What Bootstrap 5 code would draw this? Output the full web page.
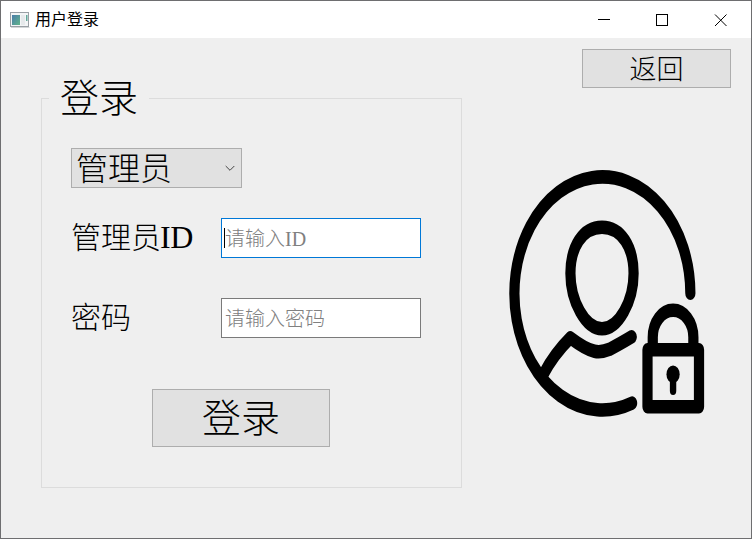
<!DOCTYPE html>
<html lang="zh-CN">
<head>
<meta charset="utf-8">
<title>用户登录</title>
<link href="https://cdn.jsdelivr.net/npm/bootstrap@5.3.0/dist/css/bootstrap.min.css" rel="stylesheet">
<style>
body{margin:0;overflow:hidden;color:#000;font-family:"Noto Sans CJK SC",sans-serif;font-weight:300}
.window{width:752px;height:539px;border:1px solid #6e6e70;background:#efefef}
.titlebar{height:37px;background:#fff;font-size:16px;font-weight:400;line-height:34px;padding-left:9px}
.titlebar .caption{margin-left:5px;padding-bottom:3px}
.winbtns{margin-right:1px}
.winbtn{width:58px;height:36px}
.group{width:421px;height:390px;margin:60px 0 0 40px;border:1px solid #dcdcdc}
.group-title{width:100px;height:50px;line-height:44px;font-size:39px;margin:-26px 0 0 7px;padding-left:11px;background:#efefef;white-space:nowrap}
.flat,.flat:hover{background:#e1e1e1;border:1px solid #adadad;border-radius:0;color:#000;font-weight:300;line-height:1;padding:0;display:flex;align-items:center;justify-content:center}
.role{width:171px;height:40px;font-size:32px;margin:25px 0 30px 29px;padding:0 6px 0 4px;justify-content:space-between}
.role span{padding-bottom:4px}
.line{height:40px;padding-left:29px;margin-bottom:40px}
.line label{width:150px;font-size:30px;line-height:35px;white-space:nowrap}
.line .form-control{position:relative;width:200px;height:40px;border:1px solid #7a7a7a;border-radius:0;padding:0 3px;font-size:20px;font-weight:300;line-height:38px;color:#808080;background:#fff}
.line .active-field{border-color:#0078d7}
.caret{position:absolute;left:2px;top:9px;width:1px;height:20px;background:#000}
.latin{font-family:"Liberation Serif",serif;font-weight:400;line-height:1}
label .latin{font-size:32px;letter-spacing:-.5px;margin-left:-1px}
.submit{width:178px;height:58px;font-size:39px;margin:51px 0 0 110px}
.submit span{padding-bottom:5px}
.side{width:289px}
.back{width:149px;height:39px;font-size:27px;margin:11px 0 0 120px}
.back span{padding-bottom:3px}
.portrait{display:block;margin:72px 0 0 38px}
</style>
<script src="https://cdn.jsdelivr.net/npm/bootstrap@5.3.0/dist/js/bootstrap.bundle.min.js"></script>
</head>
<body>
<div class="window d-flex flex-column">
  <header class="titlebar d-flex align-items-center">
    <svg width="20" height="16" viewBox="0 0 20 16">
      <defs><linearGradient id="g" x1="0" y1="0" x2="1" y2="1"><stop stop-color="#4a7caa"/><stop offset="1" stop-color="#61b58a"/></linearGradient></defs>
      <rect x=".5" y=".5" width="18" height="14" fill="#f3f5f6" stroke="#9aa0a5"/>
      <path d="M1 15.500h18.500" stroke="#d3d6d8"/>
      <rect x="2" y="3" width="8" height="10" fill="url(#g)"/>
      <rect x="11" y="3" width="4" height="10" fill="#e6e9eb"/>
      <rect x="16" y="3" width="1.500" height="6" fill="#62a89a"/>
    </svg>
    <span class="caption">用户登录</span>
    <div class="winbtns d-flex ms-auto">
      <svg class="winbtn" viewBox="0 0 58 36" stroke="#000" fill="none"><path d="M22 17.500h12"/></svg>
      <svg class="winbtn" viewBox="0 0 58 36" stroke="#000" fill="none"><rect x="22.500" y="12.500" width="11" height="11"/></svg>
      <svg class="winbtn" viewBox="0 0 58 36" stroke="#000" fill="none"><path d="M23 12.500l11.500 11.500M34.500 12.500L23 24"/></svg>
    </div>
  </header>
  <main class="d-flex flex-grow-1">
    <form class="group">
      <div class="group-title">登录</div>
      <button type="button" class="btn flat role"><span>管理员</span>
        <svg width="10" height="7" viewBox="0 0 10 7" fill="none" stroke="#444"><path d="M.7 1L5 5.300 9.300 1"/></svg>
      </button>
      <div class="line d-flex">
        <label>管理员<span class="latin">ID</span></label>
        <div class="form-control active-field" role="textbox" tabindex="0">请输入<span class="latin">ID</span><span class="caret"></span></div>
      </div>
      <div class="line d-flex">
        <label>密码</label>
        <div class="form-control" role="textbox" tabindex="0">请输入密码</div>
      </div>
      <button type="button" class="btn flat submit"><span>登录</span></button>
    </form>
    <aside class="side">
      <button type="button" class="btn flat back"><span>返回</span></button>
      <svg class="portrait" width="220" height="270" viewBox="500 160 220 270">
        <g transform="translate(602 293.300) scale(.752 1)" fill="none" stroke="#000" stroke-width="13.600" stroke-linecap="round" stroke-linejoin="round">
          <path d="M117.500 0A117 116.500 0 1 0 40 109.800"/>
          <path d="M0-66C26-66 42-46 42-20C42 8 22 35.500 0 35.500S-42 8-42-20C-42-46-26-66 0-66Z"/>
          <path d="M-78 81Q-64 61-42 44.500C-13 61-3 60 10 56Q23 51 39.500 43.500"/>
          <rect x="60.500" y="56.500" width="68.500" height="57"/>
          <path d="M67.500 56V44a27 27 0 0 1 54 0V56"/>
          <ellipse cx="94.500" cy="81" rx="8.800" ry="8.800" fill="#000" stroke="none"/>
          <path d="M94.500 82V97.500" stroke-width="8.500"/>
        </g>
      </svg>
    </aside>
  </main>
</div>
</body>
</html>
